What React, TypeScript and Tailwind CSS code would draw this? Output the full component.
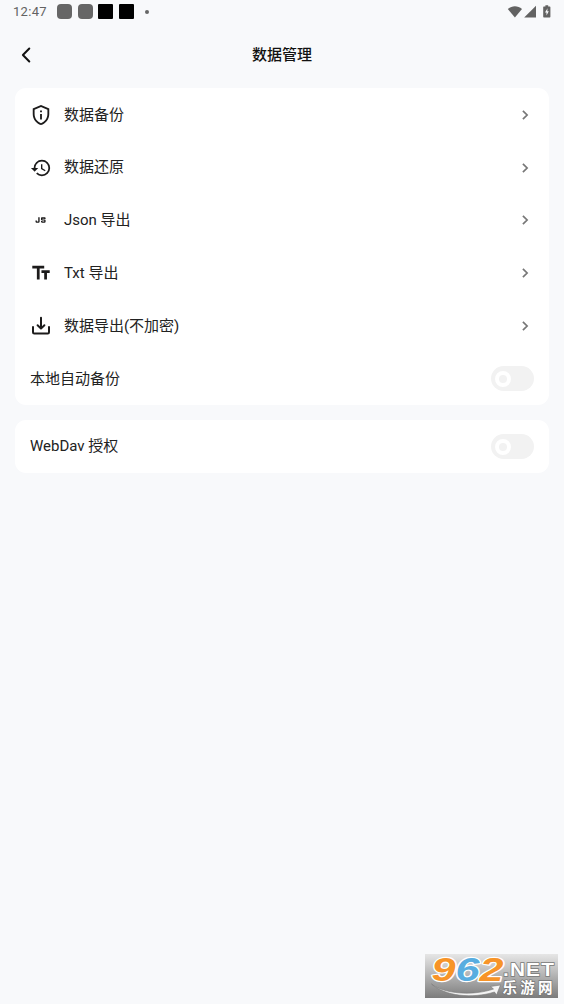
import { useState } from "react";
import type { ReactNode } from "react";
import {
  MdHistory,
  MdJavascript,
  MdOutlinePrivacyTip,
  MdTextFields,
} from "react-icons/md";

function ExportIcon() {
  return (
    <svg
      viewBox="0 0 22 22"
      className="size-[22px]"
      fill="none"
      stroke="currentColor"
      strokeWidth="2"
      strokeLinecap="round"
      strokeLinejoin="round"
    >
      <path d="M3 12v5.200c0 .7.5 1.200 1.200 1.200h13.600c.7 0 1.200-.5 1.200-1.200V12" />
      <path d="M11 2.700v10.800M7.600 10.300l3.400 3.300 3.400-3.300" />
    </svg>
  );
}

function StatusBar() {
  return (
    <div className="flex h-[23px] items-center justify-between px-[13px] text-[#626262]">
      <div className="flex items-center">
        <span className="w-[44px] text-[13px] leading-none tracking-[0.3px]">12:47</span>
        <div className="flex gap-[5.6px]">
          <span className="size-[15px] rounded-[4px] bg-[#666]" />
          <span className="size-[15px] rounded-[4px] bg-[#666]" />
          <span className="size-[15px] rounded-[1px] bg-black" />
          <span className="size-[15px] rounded-[1px] bg-black" />
        </div>
        <span className="ml-[11px] size-1 rounded-full bg-[#666]" />
      </div>
      <svg viewBox="0 0 44 16" className="h-4 w-11" fill="currentColor">
        <path d="M.8 5.100C5 1.400 10.800 1.400 15 5.100L7.900 13.500z" />
        <path d="M29 1.800v11.700H17.200z" />
        <path d="M36.800 2.600h1.600V1.300h2.800v1.300h1.600q.6 0 .6.600v9.600q0 .7-.7.7h-5.800q-.7 0-.7-.7V3.200q0-.6.6-.6z" />
        <path d="m40.500 4.300-2.500 4.200h1.500v3l2.300-4.200h-1.500z" fill="#f8f9fb" />
      </svg>
    </div>
  );
}

function LinkRow({ icon, label }: { icon: ReactNode; label: string }) {
  return (
    <button className="flex h-[52.8px] w-full items-center pl-[15px] pr-[19.5px] text-left">
      <span className="flex w-[22.4px] justify-center text-[#1c1b1b]">{icon}</span>
      <span className="ml-[11.6px] flex-1">{label}</span>
      <svg
        viewBox="0 0 10 10"
        className="size-[10px] text-[#777]"
        fill="none"
        stroke="currentColor"
        strokeWidth="1.7"
      >
        <path d="m2.900 .9 4.200 4.100-4.200 4.100" />
      </svg>
    </button>
  );
}

function SwitchRow({ label }: { label: string }) {
  const [on, setOn] = useState(false);

  return (
    <div className="flex h-[52.8px] items-center justify-between px-[15px]">
      <span>{label}</span>
      <button
        role="switch"
        aria-checked={on}
        aria-label={label}
        onClick={() => setOn(!on)}
        className={`flex h-[25px] w-[43px] items-center rounded-full px-1 ${
          on ? "justify-end bg-gray-400" : "bg-[#f2f2f2]"
        }`}
      >
        <span className="size-4 rounded-full border-4 border-white bg-[#f2f2f2]" />
      </button>
    </div>
  );
}

function SiteBadge() {
  return (
    <svg
      viewBox="0 0 133 44"
      className="absolute bottom-[6px] right-[6px] h-11 w-[133px] overflow-visible"
    >
      <defs>
        <linearGradient id="badge-bg" x2="0" y2="1">
          <stop offset="0" stopColor="#e6e6e6" />
          <stop offset="0.5" stopColor="#b2b2b2" />
          <stop offset="1" stopColor="#7c7c7c" />
        </linearGradient>
      </defs>
      <rect width="133" height="44" fill="url(#badge-bg)" />
      <path
        d="M6.500 30c12 10 42 12 62 5l-3-2.500 10-1.500-4 10-2-3c-22 7-50 4-63-8z"
        fill="#f4f4f4"
        stroke="#777"
        strokeWidth="0.6"
      />
      <g
        fontFamily="'Liberation Sans', Arial, sans-serif"
        fontWeight="700"
        fontStyle="italic"
        fontSize="33"
        stroke="#fff"
        strokeWidth="2.4"
        strokeLinejoin="round"
        paintOrder="stroke"
      >
        <text x="6.500" y="27" fill="#f79428" textLength="24" lengthAdjust="spacingAndGlyphs">9</text>
        <text x="30.500" y="27" fill="#58ade0" textLength="24" lengthAdjust="spacingAndGlyphs">6</text>
        <text x="54.500" y="27" fill="#f79428" textLength="24" lengthAdjust="spacingAndGlyphs">2</text>
      </g>
      <g fill="#fff" stroke="#777" strokeWidth="1.4" paintOrder="stroke" fontWeight="700">
        <text
          x="78"
          y="21.500"
          fontFamily="'Liberation Sans', Arial, sans-serif"
          fontSize="18.500"
          textLength="52"
          lengthAdjust="spacingAndGlyphs"
          letterSpacing="1"
        >
          .NET
        </text>
        <text
          x="77.500"
          y="39"
          fontFamily="'Noto Sans CJK SC', sans-serif"
          fontSize="14.500"
          textLength="50"
        >
          乐游网
        </text>
      </g>
    </svg>
  );
}

export default function App() {
  return (
    <div className="relative h-[1004px] w-[564px] overflow-hidden bg-[#f8f9fb] font-[Roboto,'Noto_Sans_CJK_SC',sans-serif] text-[15px] text-[#222]">
      <StatusBar />

      <header className="grid h-[63px] grid-cols-[64px_1fr_64px] items-center">
        <button aria-label="返回" className="pl-5">
          <svg
            viewBox="0 0 12 18"
            className="h-[18px] w-3"
            fill="none"
            stroke="#111"
            strokeWidth="2"
            strokeLinecap="round"
            strokeLinejoin="round"
          >
            <path d="M9.300 2.500 2.900 9l6.400 6.500" />
          </svg>
        </button>
        <h1 className="pt-px text-center text-[15px] font-medium text-[#111]">数据管理</h1>
      </header>

      <main className="flex flex-col gap-[15px] px-[15px] pt-[2.4px]">
        <section className="rounded-[11px] bg-white">
          <LinkRow icon={<MdOutlinePrivacyTip size={22} />} label="数据备份" />
          <LinkRow icon={<MdHistory size={22} />} label="数据还原" />
          <LinkRow icon={<MdJavascript size={22} />} label="Json 导出" />
          <LinkRow icon={<MdTextFields size={22} />} label="Txt 导出" />
          <LinkRow icon={<ExportIcon />} label="数据导出(不加密)" />
          <SwitchRow label="本地自动备份" />
        </section>
        <section className="rounded-[11px] bg-white">
          <SwitchRow label="WebDav 授权" />
        </section>
      </main>

      <SiteBadge />
    </div>
  );
}
